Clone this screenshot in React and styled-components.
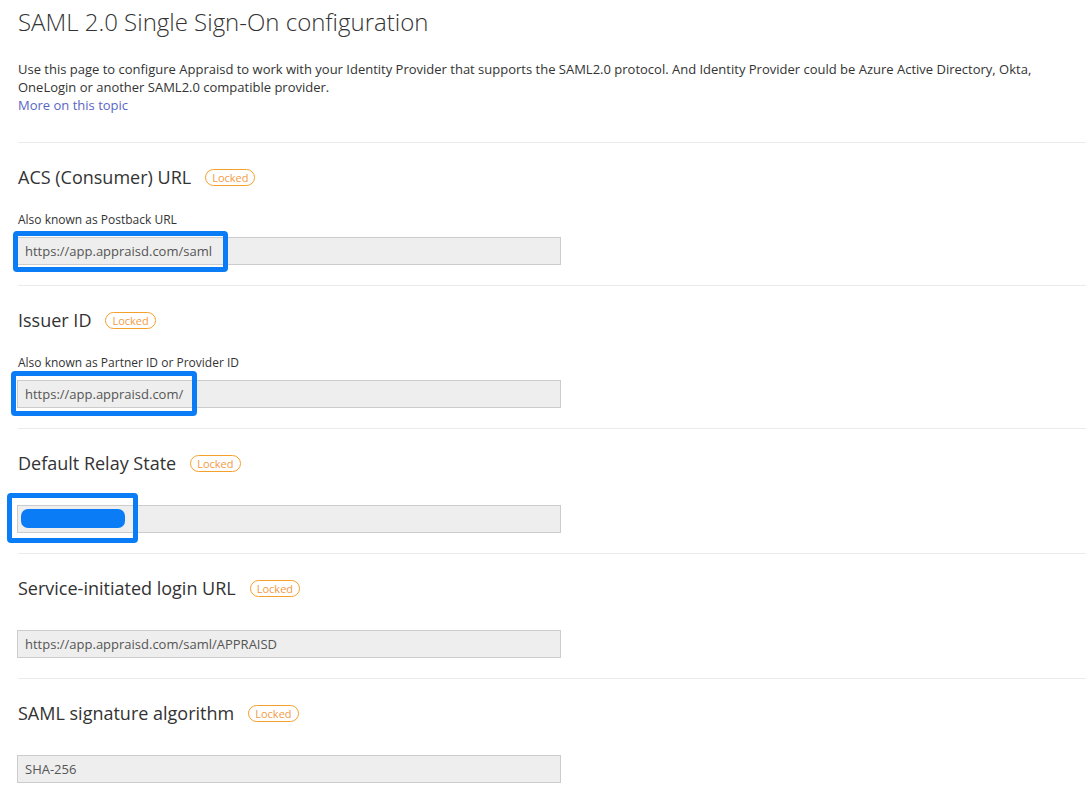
import styled, { createGlobalStyle } from 'styled-components';

const GlobalStyle = createGlobalStyle`
  body {
    margin: 0;
    background: #fff;
    font-family: "Open Sans", "Liberation Sans", sans-serif;
    color: #333;
  }
`;

const Page = styled.div`
  padding: 4px 6px 0 18px;
`;

const Title = styled.h1`
  margin: 0 0 20px;
  font-size: 24px;
  line-height: 36px;
  font-weight: 300;
  color: #333;
`;

const Intro = styled.p`
  margin: 0 0 28px;
  font-size: 13px;
  line-height: 18px;
  color: #333;
  max-width: 1040px;
`;

const TopicLink = styled.a`
  display: block;
  color: #5a66c4;
  text-decoration: none;
  cursor: pointer;
`;

const Section = styled.section`
  border-top: 1px solid #ebebeb;
  padding: 22px 0 20px;

  &:last-child {
    padding-bottom: 0;
  }
`;

const HeadRow = styled.div`
  display: flex;
  align-items: center;
  height: 24px;
`;

const Heading = styled.h2`
  margin: 0;
  font-size: 18px;
  line-height: 24px;
  font-weight: 400;
  color: #333;
`;

const Badge = styled.span`
  margin-left: 14px;
  height: 17px;
  padding: 0 6px;
  border: 1px solid #f5a02a;
  border-radius: 9px;
  box-sizing: border-box;
  font-size: 11px;
  line-height: 15px;
  color: #f29a45;
`;

const Label = styled.div`
  margin-top: 22px;
  font-size: 12px;
  line-height: 17px;
  color: #333;
`;

const FieldWrap = styled.div`
  position: relative;
  width: 544px;
  margin-left: -1px;
  margin-top: ${p => (p.$hasLabel ? '9px' : '30px')};
`;

const Input = styled.input`
  display: block;
  width: 544px;
  height: 28px;
  box-sizing: border-box;
  padding: 0 7px;
  border: 1px solid #ccc;
  background: #eee;
  font-family: inherit;
  font-size: 13px;
  color: #555;
  outline: none;
`;

const Highlight = styled.div`
  position: absolute;
  left: ${p => p.$left}px;
  top: ${p => p.$top}px;
  width: ${p => p.$width}px;
  height: ${p => p.$height}px;
  box-sizing: border-box;
  border: 5px solid #0a7cf5;
  border-radius: 4px;
  pointer-events: none;
`;

const Redaction = styled.div`
  position: absolute;
  left: 9px;
  top: 11px;
  width: 104px;
  height: 19px;
  border-radius: 7px;
  background: #0a7cf5;
`;

const fields = [
  {
    title: 'ACS (Consumer) URL',
    label: 'Also known as Postback URL',
    value: 'https://app.appraisd.com/saml',
    box: { left: -4, top: -6, width: 215, height: 41 },
  },
  {
    title: 'Issuer ID',
    label: 'Also known as Partner ID or Provider ID',
    value: 'https://app.appraisd.com/',
    box: { left: -6, top: -9, width: 186, height: 45 },
  },
  {
    title: 'Default Relay State',
    value: '',
    box: { left: -10, top: -12, width: 131, height: 50 },
    redacted: true,
  },
  {
    title: 'Service-initiated login URL',
    value: 'https://app.appraisd.com/saml/APPRAISD',
  },
  {
    title: 'SAML signature algorithm',
    value: 'SHA-256',
  },
];

const App = () => {
  return (
    <Page>
      <GlobalStyle />
      <Title>SAML 2.0 Single Sign-On configuration</Title>
      <Intro>
        Use this page to configure Appraisd to work with your Identity Provider that supports the SAML2.0 protocol. And Identity Provider could be Azure Active Directory, Okta, OneLogin or another SAML2.0 compatible provider.
        <TopicLink>More on this topic</TopicLink>
      </Intro>
      {fields.map(f => (
        <Section key={f.title}>
          <HeadRow>
            <Heading>{f.title}</Heading>
            <Badge>Locked</Badge>
          </HeadRow>
          {f.label && <Label>{f.label}</Label>}
          <FieldWrap $hasLabel={!!f.label}>
            <Input readOnly value={f.value} />
            {f.box && (
              <Highlight
                $left={f.box.left}
                $top={f.box.top}
                $width={f.box.width}
                $height={f.box.height}
              >
                {f.redacted && <Redaction />}
              </Highlight>
            )}
          </FieldWrap>
        </Section>
      ))}
    </Page>
  );
};

export default App;
